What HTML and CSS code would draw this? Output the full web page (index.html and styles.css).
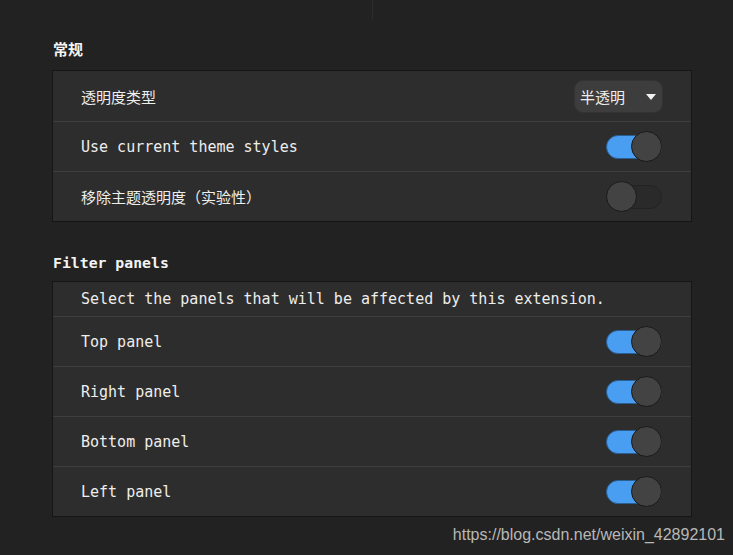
FILE: index.html
```html
<!DOCTYPE html>
<html lang="zh">
<head>
<meta charset="utf-8">
<title>Settings</title>
<link rel="stylesheet" href="styles.css">
</head>
<body>
<div class="page">
  <div class="topbar"><div class="topbar-left"></div></div>
  <main class="content">
    <h2 class="section-title">常规</h2>
    <div class="list">
      <div class="row">
        <span class="label">透明度类型</span>
        <div class="dropdown"><span>半透明</span><span class="arrow"></span></div>
      </div>
      <div class="row">
        <span class="label">Use current theme styles</span>
        <span class="switch on"><span class="knob"></span></span>
      </div>
      <div class="row">
        <span class="label">移除主题透明度（实验性）</span>
        <span class="switch"><span class="knob"></span></span>
      </div>
    </div>

    <h2 class="section-title second">Filter panels</h2>
    <div class="list">
      <div class="row desc">
        <span class="label">Select the panels that will be affected by this extension.</span>
      </div>
      <div class="row">
        <span class="label">Top panel</span>
        <span class="switch on"><span class="knob"></span></span>
      </div>
      <div class="row">
        <span class="label">Right panel</span>
        <span class="switch on"><span class="knob"></span></span>
      </div>
      <div class="row">
        <span class="label">Bottom panel</span>
        <span class="switch on"><span class="knob"></span></span>
      </div>
      <div class="row">
        <span class="label">Left panel</span>
        <span class="switch on"><span class="knob"></span></span>
      </div>
    </div>
  </main>
  <div class="watermark">https://blog.csdn.net/weixin_42892101</div>
</div>
</body>
</html>
```

FILE: styles.css
```css
html, body {
  margin: 0;
  padding: 0;
  background: #222222;
}
body {
  width: 733px;
  height: 555px;
  overflow: hidden;
  font-family: "DejaVu Sans Mono", "Noto Sans CJK SC", monospace;
  font-size: 15px;
  color: #eeeeec;
}
.page {
  position: relative;
  width: 733px;
  height: 555px;
}
.topbar {
  height: 20px;
  display: flex;
}
.topbar-left {
  width: 372px;
  border-right: 1px solid #2c2c2c;
}
.content {
  padding: 20px 0 0 52px;
  width: 640px;
}
.section-title {
  margin: 0 0 10px 1px;
  height: 20px;
  line-height: 20px;
  font-size: 15px;
  font-weight: bold;
  color: #f4f4f4;
}
.section-title.second {
  margin-top: 31px;
  margin-bottom: 8px;
  font-size: 14.8px;
}
.list {
  background: #2d2d2d;
  border: 1px solid #151515;
}
.row {
  height: 50px;
  box-sizing: border-box;
  display: flex;
  align-items: center;
  justify-content: space-between;
  padding: 0 29px 0 28px;
}
.row + .row {
  border-top: 1px solid #3e3e3e;
}
.row.desc {
  height: 34px;
}
.label {
  white-space: nowrap;
}
.dropdown {
  width: 89px;
  height: 33px;
  box-sizing: border-box;
  border-radius: 9px;
  background: #3d3d3d;
  border: 1px solid #333;
  display: flex;
  align-items: center;
  justify-content: space-between;
  padding: 0 6px 0 5px;
  font-size: 15px;
  margin-top: 1px;
  margin-right: -1px;
}
.arrow {
  width: 0;
  height: 0;
  border-left: 5px solid transparent;
  border-right: 5px solid transparent;
  border-top: 6px solid #f2f2f2;
}
.switch {
  position: relative;
  width: 56px;
  height: 24px;
  box-sizing: border-box;
  border-radius: 12px;
  background: #2a2a2a;
  border: 1px solid #232323;
}
.switch.on {
  background: #4a9ef2;
  border-color: #2a5f94;
}
.knob {
  position: absolute;
  top: -5px;
  left: -1px;
  width: 31px;
  height: 31px;
  box-sizing: border-box;
  border-radius: 50%;
  background: #434343;
  border: 1px solid #1a1a1a;
}
.switch.on .knob {
  left: auto;
  right: -1px;
}
.watermark {
  position: absolute;
  right: 8px;
  top: 525px;
  font-family: "Liberation Sans", Arial, sans-serif;
  font-size: 16px;
  line-height: 20px;
  color: #b8b8b8;
}
```
